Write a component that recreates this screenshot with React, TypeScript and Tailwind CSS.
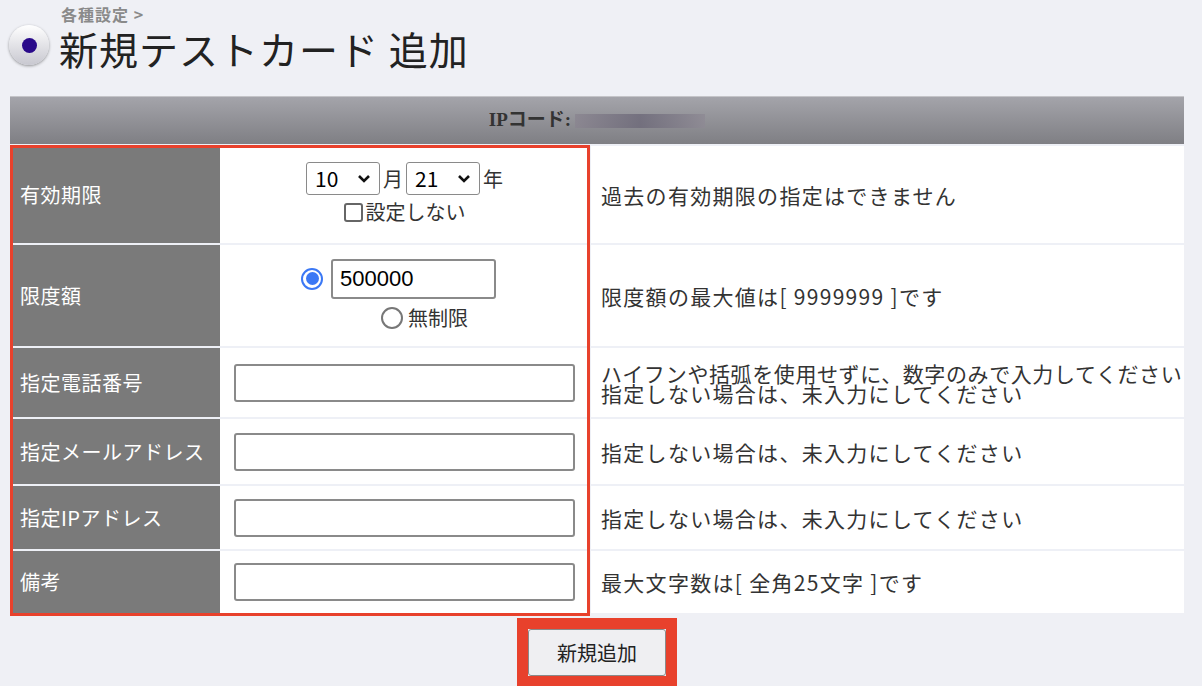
import React from "react";

const F = { fontFamily: '"Noto Sans CJK JP", "Liberation Sans", sans-serif' };

function Row({ label, h, mid, right }: { label: string; h: string; mid: React.ReactNode; right: React.ReactNode }) {
  return (
    <div className={`flex ${h} border-t-2 border-[#eef0f6]`}>
      <div className="w-[210px] shrink-0 bg-[#7a7a7a] text-white text-[20px] tracking-[0.5px] flex items-center pl-[10px]">{label}</div>
      <div className="w-[369px] shrink-0 bg-white flex flex-col items-center justify-center">{mid}</div>
      <div className="w-[2px] bg-[#eef0f6]" />
      <div className="flex-1 bg-white flex flex-col justify-center pl-[10px] text-[21px] tracking-[1.3px] text-[#333] leading-[20px]">{right}</div>
    </div>
  );
}

const TextIn = () => (
  <div className="w-[341px] h-[38px] border-2 border-[#8a8a8a] rounded-[3px] bg-white" />
);

const Sel = ({ v }: { v: string }) => (
  <div className="h-[33px] w-[74px] border border-[#8a8a8a] rounded-[3px] bg-white flex items-center justify-between px-[8px] text-[21px] text-black">
    <span>{v}</span>
    <svg width="14" height="10" viewBox="0 0 14 10"><path d="M2 2l5 5 5-5" stroke="#111" strokeWidth="2.6" fill="none" /></svg>
  </div>
);

export default function App() {
  return (
    <div className="w-[1202px] h-[686px] bg-[#eff0f5] relative overflow-hidden" style={F}>
      <div className="flex items-center pl-[9px] pt-[4px] gap-[10px]">
        <div className="w-[40px] h-[40px] rounded-full bg-gradient-to-b from-white to-[#c8c8d0] shadow-[0_1px_3px_rgba(0,0,0,0.4)] flex items-center justify-center mt-[14px]">
          <div className="w-[15px] h-[15px] rounded-full bg-[#2a0a8a]" />
        </div>
        <div className="flex flex-col">
          <div className="text-[16px] font-bold text-[#8a8a8a] leading-[20px] pl-[2px] tracking-[1px]">各種設定 &gt;</div>
          <div className="text-[39px] text-[#222] leading-[48px] tracking-[1px]">新規テストカード 追加</div>
        </div>
      </div>
      <div className="mt-[24px] ml-[10px] w-[1174px]">
        <div className="h-[48px] bg-gradient-to-b from-[#a4a4aa] to-[#7f7f84] border-t border-[#c4c4c8] flex items-center justify-center text-[19px] font-bold text-[#333]" style={{ fontFamily: '"Liberation Serif", "Noto Sans CJK JP", serif' }}>
          IPコード:
          <span className="ml-[4px] inline-block w-[130px] h-[14px] bg-gradient-to-r from-[#8a8590] via-[#6c6878] to-[#8e8a94] opacity-80" />
        </div>
        <Row label="有効期限" h="h-[99px]" right="過去の有効期限の指定はできません" mid={
          <>
            <div className="flex items-center gap-[3px] text-[20px] text-[#333]"><Sel v="10" />月<Sel v="21" />年</div>
            <div className="flex items-center gap-[3px] text-[20px] text-[#333] mt-[2px]"><div className="w-[19px] h-[19px] border-2 border-[#666] rounded-[3px] bg-white" />設定しない</div>
          </>
        } />
        <Row label="限度額" h="h-[103px]" right="限度額の最大値は[ 9999999 ]です" mid={
          <>
            <div className="flex items-center gap-[8px] ml-[-12px]">
              <div className="w-[22px] h-[22px] rounded-full border-2 border-[#3b78f5] flex items-center justify-center"><div className="w-[13px] h-[13px] rounded-full bg-[#3b78f5]" /></div>
              <div className="w-[165px] h-[40px] border-2 border-[#8a8a8a] rounded-[3px] bg-white text-[22px] text-black pl-[7px] leading-[36px]" style={{ fontFamily: '"Liberation Sans", sans-serif' }}>500000</div>
            </div>
            <div className="flex items-center gap-[5px] text-[20px] text-[#333] mt-[4px] ml-[40px]"><div className="w-[22px] h-[22px] rounded-full border-2 border-[#777] bg-white" />無制限</div>
          </>
        } />
        <Row label="指定電話番号" h="h-[71px]" mid={<TextIn />} right={<><div className="tracking-[0.6px]">ハイフンや括弧を使用せずに、数字のみで入力してください</div><div>指定しない場合は、未入力にしてください</div></>} />
        <Row label="指定メールアドレス" h="h-[67px]" mid={<TextIn />} right="指定しない場合は、未入力にしてください" />
        <Row label="指定IPアドレス" h="h-[65px]" mid={<TextIn />} right="指定しない場合は、未入力にしてください" />
        <Row label="備考" h="h-[64px]" mid={<TextIn />} right="最大文字数は[ 全角25文字 ]です" />
      </div>
      <div className="flex justify-center w-[1194px] mt-[5px]">
        <div className="border-[11px] border-[#e8412c]">
          <div className="h-[47px] w-[138px] border border-[#8a8a8a] rounded-[3px] bg-[#efeff2] text-[20px] text-[#222] flex items-center justify-center">新規追加</div>
        </div>
      </div>
      <div className="absolute left-[10px] top-[145px] w-[580px] h-[471px] border-[3px] border-[#e8412c] pointer-events-none" />
    </div>
  );
}
